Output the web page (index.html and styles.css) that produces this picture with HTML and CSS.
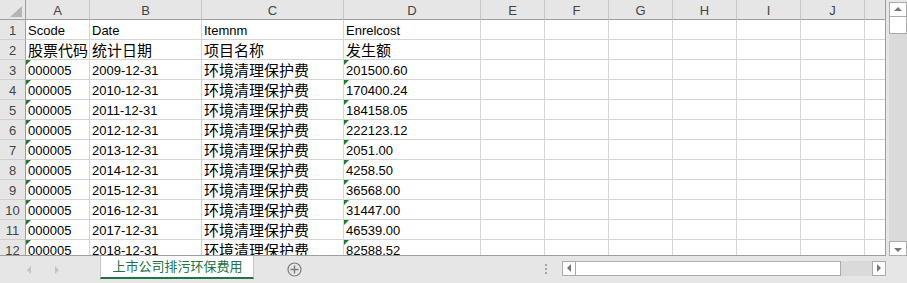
FILE: index.html
```html
<!DOCTYPE html>
<html lang="zh-CN">
<head>
    <meta charset="UTF-8">
    <title>上市公司排污环保费用</title>
    <link rel="stylesheet" href="styles.css">
</head>
  <body>
    <main class="workbook">

      <div class="top">

        <section class="sheet">
          <div class="corner"><span class="corner-mark"></span></div>
          <div class="col">A</div><div class="col">B</div><div class="col">C</div><div class="col">D</div><div class="col">E</div>
          <div class="col">F</div><div class="col">G</div><div class="col">H</div><div class="col">I</div><div class="col">J</div><div class="col"></div>

          <div class="num">1</div><div>Scode</div><div>Date</div><div>Itemnm</div><div>Enrelcost</div><div></div><div></div><div></div><div></div><div></div><div></div><div></div>
          <div class="num">2</div><div class="zh">股票代码</div><div class="zh">统计日期</div><div class="zh">项目名称</div><div class="zh">发生额</div><div></div><div></div><div></div><div></div><div></div><div></div><div></div>
          <div class="num">3</div><div class="txt">000005</div><div>2009-12-31</div><div class="zh">环境清理保护费</div><div class="txt">201500.60</div><div></div><div></div><div></div><div></div><div></div><div></div><div></div>
          <div class="num">4</div><div class="txt">000005</div><div>2010-12-31</div><div class="zh">环境清理保护费</div><div class="txt">170400.24</div><div></div><div></div><div></div><div></div><div></div><div></div><div></div>
          <div class="num">5</div><div class="txt">000005</div><div>2011-12-31</div><div class="zh">环境清理保护费</div><div class="txt">184158.05</div><div></div><div></div><div></div><div></div><div></div><div></div><div></div>
          <div class="num">6</div><div class="txt">000005</div><div>2012-12-31</div><div class="zh">环境清理保护费</div><div class="txt">222123.12</div><div></div><div></div><div></div><div></div><div></div><div></div><div></div>
          <div class="num">7</div><div class="txt">000005</div><div>2013-12-31</div><div class="zh">环境清理保护费</div><div class="txt">2051.00</div><div></div><div></div><div></div><div></div><div></div><div></div><div></div>
          <div class="num">8</div><div class="txt">000005</div><div>2014-12-31</div><div class="zh">环境清理保护费</div><div class="txt">4258.50</div><div></div><div></div><div></div><div></div><div></div><div></div><div></div>
          <div class="num">9</div><div class="txt">000005</div><div>2015-12-31</div><div class="zh">环境清理保护费</div><div class="txt">36568.00</div><div></div><div></div><div></div><div></div><div></div><div></div><div></div>
          <div class="num">10</div><div class="txt">000005</div><div>2016-12-31</div><div class="zh">环境清理保护费</div><div class="txt">31447.00</div><div></div><div></div><div></div><div></div><div></div><div></div><div></div>
          <div class="num">11</div><div class="txt">000005</div><div>2017-12-31</div><div class="zh">环境清理保护费</div><div class="txt">46539.00</div><div></div><div></div><div></div><div></div><div></div><div></div><div></div>
          <div class="num">12</div><div class="txt">000005</div><div>2018-12-31</div><div class="zh">环境清理保护费</div><div class="txt">82588.52</div><div></div><div></div><div></div><div></div><div></div><div></div><div></div>
        </section>

        <section class="vscroll">
          <span class="btn up"></span>
          <span class="thumb"></span>
          <span class="track"></span>
          <span class="btn down"></span>
        </section>

      </div>

      <div class="bottom">
        <div class="nav">
          <span class="arrow left"></span>
          <span class="arrow right"></span>
        </div>
        <div class="tab">上市公司排污环保费用</div>
        <svg class="add" width="15" height="15" viewBox="0 0 15 15">
          <circle cx="7.5" cy="7.5" r="6.5" fill="none" stroke="#7b7b7b" stroke-width="1.2"/>
          <path d="M7.5 3.5v8M3.5 7.5h8" stroke="#7b7b7b" stroke-width="1.4"/>
        </svg>
        <div class="spacer"></div>
        <div class="dots"><i></i><i></i><i></i></div>
        <div class="hscroll">
          <span class="btn left"></span>
          <span class="thumb"></span>
          <span class="track"></span>
          <span class="btn right"></span>
        </div>
      </div>

    </main>
  </body>
</html>
```

FILE: styles.css
```css
* {
  margin: 0;
  padding: 0;
  box-sizing: border-box;
}

html {
  font-family: "Liberation Sans", "Noto Sans CJK SC", sans-serif;
  font-size: 13px;
  background-color: #e6e6e6;
}

body {
  width: 907px;
  height: 283px;
  overflow: hidden;
}

.workbook {
  display: flex;
  flex-direction: column;
  height: 283px;
}

.top {
  display: flex;
  height: 256px;
}

/* grid */

.sheet {
  display: grid;
  grid-template-columns: 26px 64px 112px 142px 137px repeat(6, 64px) 20px;
  grid-auto-rows: 20px;
  width: 886px;
  height: 256px;
  overflow: hidden;
  background-color: #fff;
  border-right: 1px solid #9e9e9e;
  border-bottom: 1px solid #9e9e9e;
}

.sheet > div {
  position: relative;
  border-right: 1px solid #d4d4d4;
  border-bottom: 1px solid #d4d4d4;
  padding: 1px 0 0 2px;
  line-height: 19px;
  white-space: nowrap;
  overflow: visible;
  color: #000;
}

.sheet > div:nth-child(12n) {
  border-right: 0;
}

.sheet > .zh {
  font-family: "Noto Sans CJK SC", sans-serif;
  font-size: 15px;
  padding-top: 0;
  z-index: 1;
}

.sheet > .txt::before {
  content: "";
  position: absolute;
  top: 0;
  left: 0;
  border-top: 5px solid #1e7b30;
  border-right: 5px solid transparent;
}

.sheet > .col,
.sheet > .corner {
  background-color: #e6e6e6;
  border-right-color: #c6c6c6;
  border-bottom-color: #9e9e9e;
  text-align: center;
  color: #444;
  padding: 1px 0 0;
}

.sheet > .num {
  background-color: #e6e6e6;
  border-right-color: #9e9e9e;
  border-bottom-color: #cfcfcf;
  text-align: center;
  color: #444;
  padding: 1px 0 0;
}

.sheet > .corner {
  border-right-color: #9e9e9e;
}

.corner-mark {
  position: absolute;
  right: 3px;
  bottom: 2px;
  border-left: 12px solid transparent;
  border-bottom: 11px solid #b4b4b4;
}

/* vertical scrollbar */

.vscroll {
  display: flex;
  flex-direction: column;
  width: 21px;
  padding: 2px 0 0 3px;
}

.vscroll span {
  display: block;
  width: 18px;
}

.btn,
.thumb {
  position: relative;
  background-color: #fff;
  border: 1px solid #ababab;
}

.vscroll .btn {
  height: 15px;
}

.vscroll .thumb {
  height: 17px;
  border-top: 0;
}

.track {
  flex-grow: 1;
  background-color: #dadada;
}

.btn::after {
  content: "";
  position: absolute;
  top: 50%;
  left: 50%;
}

.up::after {
  margin: -3px 0 0 -4px;
  border-left: 4px solid transparent;
  border-right: 4px solid transparent;
  border-bottom: 4px solid #777;
}

.down::after {
  margin: -1px 0 0 -4px;
  border-left: 4px solid transparent;
  border-right: 4px solid transparent;
  border-top: 4px solid #777;
}

/* sheet tabs */

.bottom {
  display: flex;
  align-items: center;
  height: 27px;
}

.nav {
  display: flex;
  align-items: center;
  width: 100px;
  height: 100%;
  padding-left: 27px;
  gap: 24px;
}

.arrow {
  width: 0;
  height: 0;
  border-top: 4px solid transparent;
  border-bottom: 4px solid transparent;
}

.arrow.left {
  border-right: 4px solid #c4c4c4;
}

.arrow.right {
  border-left: 4px solid #c4c4c4;
}

.tab {
  align-self: flex-start;
  width: 154px;
  height: 23px;
  background-color: #fff;
  border-left: 1px solid #c6c6c6;
  border-right: 1px solid #c6c6c6;
  border-bottom: 2px solid #217346;
  color: #217346;
  font-family: "Noto Sans CJK SC", sans-serif;
  font-size: 13px;
  line-height: 20px;
  text-align: center;
  padding-left: 1px;
}

.add {
  margin-left: 33px;
}

.spacer {
  flex-grow: 1;
}

.dots {
  display: flex;
  flex-direction: column;
  gap: 2px;
  margin-right: 15px;
  margin-top: -1px;
}

.dots i {
  display: block;
  width: 2px;
  height: 2px;
  background-color: #a6a6a6;
}

.hscroll {
  display: flex;
  width: 324px;
  height: 15px;
  margin-right: 21px;
  margin-top: -3px;
}

.hscroll .btn {
  width: 14px;
}

.hscroll .thumb {
  width: 265px;
  border-left: 0;
}

.left::after {
  margin: -4px 0 0 -2px;
  border-top: 4px solid transparent;
  border-bottom: 4px solid transparent;
  border-right: 4px solid #777;
}

.right::after {
  margin: -4px 0 0 -2px;
  border-top: 4px solid transparent;
  border-bottom: 4px solid transparent;
  border-left: 4px solid #777;
}
```
